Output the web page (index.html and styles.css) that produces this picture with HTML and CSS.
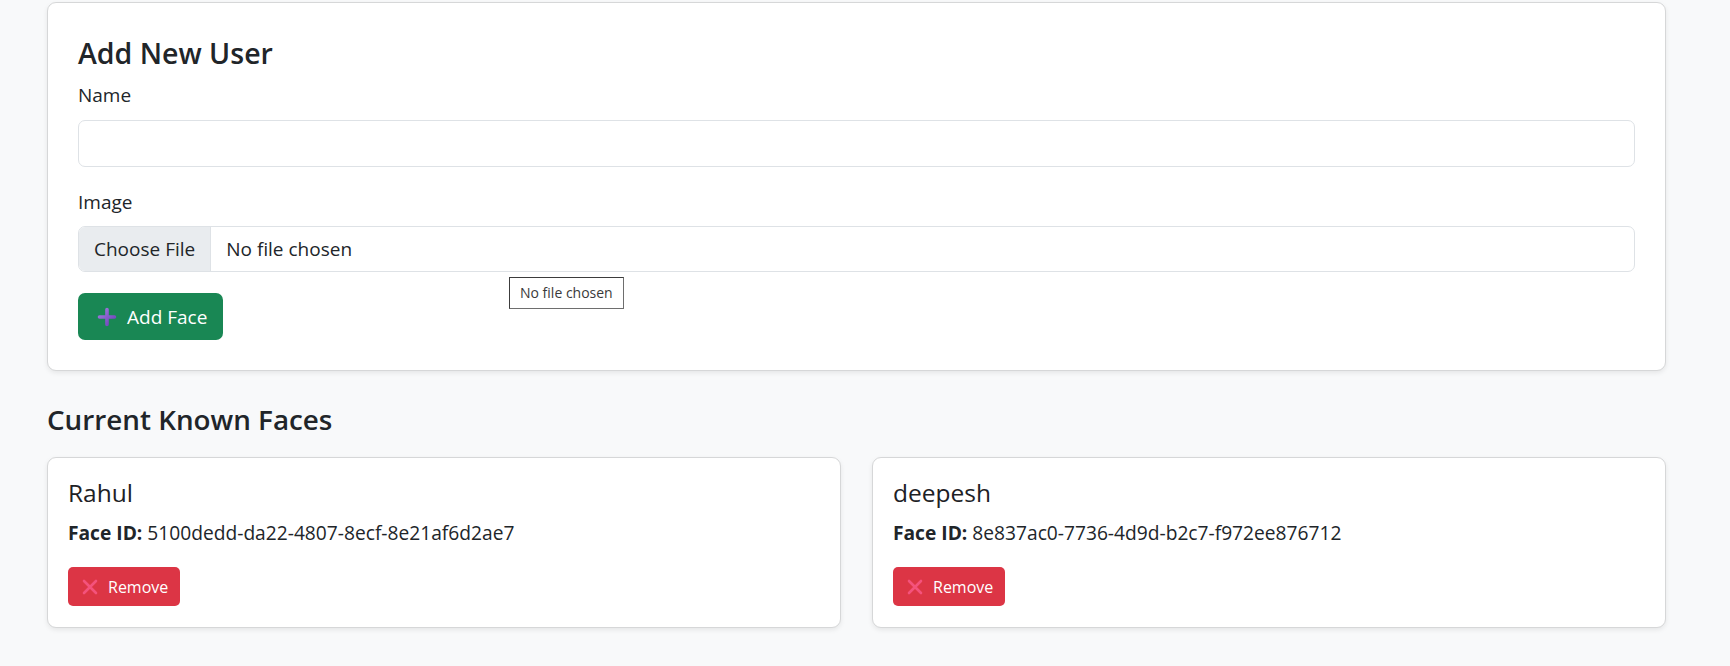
FILE: index.html
```html
<!DOCTYPE html>
<html lang="en">
<head>
<meta charset="utf-8">
<title>Face Manager</title>
<link rel="stylesheet" href="styles.css">
</head>
<body>
<div class="page">
  <section class="card form-card">
    <h3 class="form-title">Add New User</h3>
    <div class="field">
      <label class="label" for="name">Name</label>
      <input class="input" id="name" type="text">
    </div>
    <div class="field">
      <label class="label">Image</label>
      <div class="file">
        <span class="file-btn">Choose File</span>
        <span class="file-name">No file chosen</span>
        <span class="tooltip">No file chosen</span>
      </div>
    </div>
    <button class="btn btn-green" type="button">
      <svg class="ico-plus" width="20" height="20" viewBox="0 0 20 20" aria-hidden="true">
        <defs>
          <linearGradient id="pg" x1="0" y1="0" x2="1" y2="1">
            <stop offset="0" stop-color="#a37be0"/>
            <stop offset="1" stop-color="#6b3fb8"/>
          </linearGradient>
        </defs>
        <path d="M10 2.5V17.5M2.5 10H17.5" stroke="url(#pg)" stroke-width="3.6" stroke-linecap="round" fill="none"/>
      </svg>
      <span>Add Face</span>
    </button>
  </section>

  <h3 class="section-title">Current Known Faces</h3>

  <div class="grid">
    <div class="card face-card">
      <h5 class="face-name">Rahul</h5>
      <p class="face-id"><strong>Face ID:</strong> 5100dedd-da22-4807-8ecf-8e21af6d2ae7</p>
      <button class="btn btn-red" type="button">
        <svg class="ico-x" width="16" height="16" viewBox="0 0 16 16" aria-hidden="true">
          <path d="M2 2L14 14M14 2L2 14" stroke="#f4527c" stroke-width="2.6" stroke-linecap="round" fill="none"/>
        </svg>
        <span>Remove</span>
      </button>
    </div>
    <div class="card face-card">
      <h5 class="face-name">deepesh</h5>
      <p class="face-id"><strong>Face ID:</strong> 8e837ac0-7736-4d9d-b2c7-f972ee876712</p>
      <button class="btn btn-red" type="button">
        <svg class="ico-x" width="16" height="16" viewBox="0 0 16 16" aria-hidden="true">
          <path d="M2 2L14 14M14 2L2 14" stroke="#f4527c" stroke-width="2.6" stroke-linecap="round" fill="none"/>
        </svg>
        <span>Remove</span>
      </button>
    </div>
  </div>
</div>
</body>
</html>
```

FILE: styles.css
```css
* { box-sizing: border-box; }

html, body {
  margin: 0;
  padding: 0;
  background: #f8f9fa;
}

body {
  font-family: "Open Sans", "Noto Sans", "Liberation Sans", sans-serif;
  font-size: 19px;
  line-height: 1.5;
  color: #212529;
}

.page {
  padding: 2px 64px 40px 47px;
}

.card {
  background: #ffffff;
  border: 1px solid #d6d7d8;
  border-radius: 9px;
  box-shadow: 0 2px 5px rgba(0, 0, 0, 0.08);
}

.form-card {
  padding: 30px 30px 30px;
}

.form-title {
  margin: 0 0 8px;
  font-size: 28.5px;
  font-weight: 600;
  line-height: 40px;
}

.field {
  margin-bottom: 21px;
}

.label {
  display: block;
  margin-bottom: 10px;
  font-size: 19px;
  line-height: 28.5px;
}

.input {
  display: block;
  width: 100%;
  height: 47px;
  padding: 8px 15px;
  border: 1px solid #dee2e6;
  border-radius: 7px;
  background: #fff;
  font: inherit;
  color: #212529;
  outline: none;
}

.file {
  position: relative;
  display: flex;
  align-items: stretch;
  height: 46px;
  border: 1px solid #dee2e6;
  border-radius: 7px;
  background: #fff;
}

.file-btn {
  display: flex;
  align-items: center;
  padding: 0 15px;
  background: #e9ecef;
  border-right: 1px solid #dee2e6;
  border-radius: 6px 0 0 6px;
  color: #212529;
}

.file-name {
  display: flex;
  align-items: center;
  padding: 0 15px;
}

.tooltip {
  position: absolute;
  left: 430px;
  top: 50px;
  padding: 0 10px;
  height: 32px;
  line-height: 30px;
  font-size: 14px;
  color: #3a3a3a;
  background: #fff;
  border: 1px solid #6e6e6e;
  border-top-color: #3c3c3c;
  border-left-color: #3c3c3c;
  white-space: nowrap;
}

.btn {
  display: inline-flex;
  align-items: center;
  border: 0;
  font-family: inherit;
  color: #fff;
  cursor: pointer;
}

.btn-green {
  height: 47px;
  padding: 0 16px 0 19px;
  gap: 10px;
  background: #198754;
  border-radius: 7px;
  font-size: 19px;
}

.ico-plus, .ico-x {
  flex: none;
  display: block;
}

.section-title {
  margin: 32px 0 20px;
  font-size: 27.8px;
  font-weight: 600;
  line-height: 33.6px;
}

.grid {
  display: grid;
  grid-template-columns: 1fr 1fr;
  gap: 31px;
}

.face-card {
  padding: 20px 20px 21px;
}

.face-name {
  margin: 0 0 11px;
  font-size: 24.5px;
  font-weight: 500;
  line-height: 30px;
  color: #1d2125;
}

.face-id {
  margin: 0 0 20px;
  font-size: 19.2px;
  line-height: 28.5px;
}

.face-id strong {
  font-weight: 700;
}

.btn-red {
  height: 39px;
  padding: 0 12px 0 14px;
  gap: 10px;
  background: #dc3545;
  border-radius: 5px;
  font-size: 16px;
}
```
